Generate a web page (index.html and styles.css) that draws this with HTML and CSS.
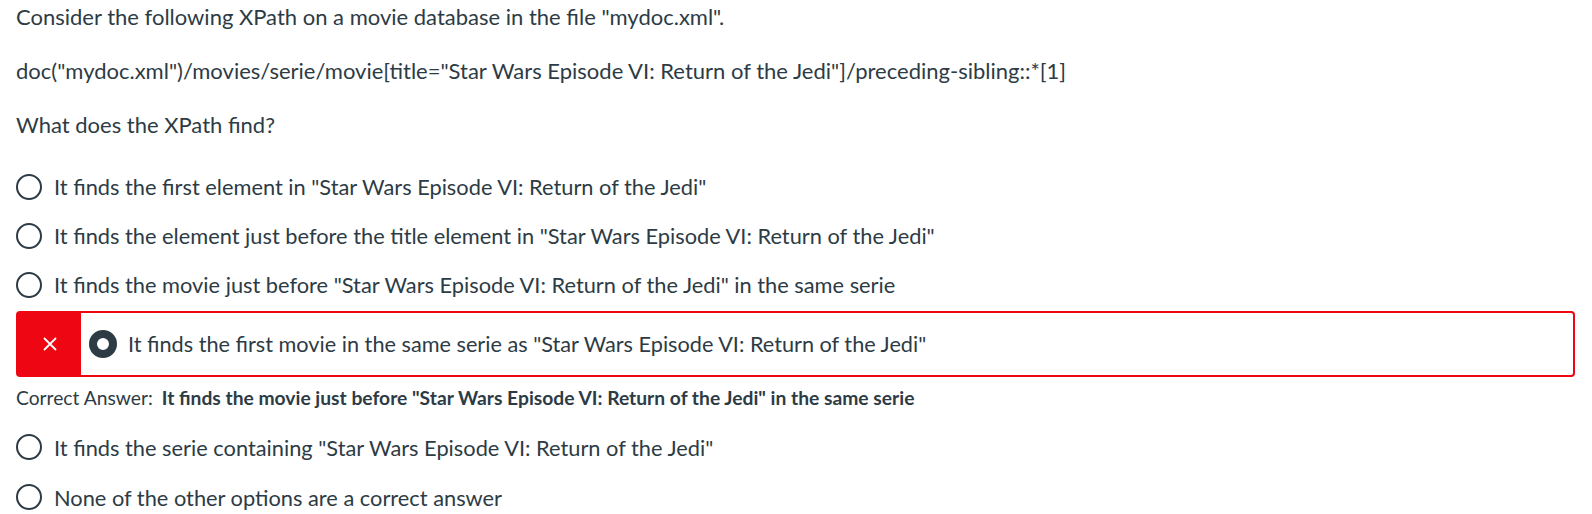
FILE: index.html
```html
<!DOCTYPE html>
<html>
<head>
<meta charset="utf-8">
<link rel="stylesheet" href="styles.css">
</head>
<body>
<div class="question">
  <p class="para">Consider the following XPath on a movie database in the file "mydoc.xml".</p>
  <p class="para">doc("mydoc.xml")/movies/serie/movie[title="Star Wars Episode VI: Return of the Jedi"]/preceding-sibling::*[1]</p>
  <p class="para">What does the XPath find?</p>
  <div class="answers">
    <div class="option"><span class="radio"></span><span class="label">It finds the first element in "Star Wars Episode VI: Return of the Jedi"</span></div>
    <div class="option"><span class="radio"></span><span class="label">It finds the element just before the title element in "Star Wars Episode VI: Return of the Jedi"</span></div>
    <div class="option"><span class="radio"></span><span class="label">It finds the movie just before "Star Wars Episode VI: Return of the Jedi" in the same serie</span></div>
    <div class="option wrong">
      <div class="flag">
        <svg width="14" height="14" viewBox="0 0 14 14"><path d="M1 1 L13 13 M13 1 L1 13" stroke="#fff" stroke-width="1.8" fill="none"/></svg>
      </div>
      <span class="radio checked"></span><span class="label">It finds the first movie in the same serie as "Star Wars Episode VI: Return of the Jedi"</span>
    </div>
    <div class="correct">Correct Answer:&nbsp; <b>It finds the movie just before "Star Wars Episode VI: Return of the Jedi" in the same serie</b></div>
    <div class="option tall"><span class="radio"></span><span class="label">It finds the serie containing "Star Wars Episode VI: Return of the Jedi"</span></div>
    <div class="option tall"><span class="radio"></span><span class="label">None of the other options are a correct answer</span></div>
  </div>
</div>
</body>
</html>
```
FILE: styles.css
```css
html, body {
  margin: 0;
  padding: 0;
  background: #fff;
}
body {
  font-family: Lato, "Noto Sans", sans-serif;
  color: #2d3b45;
  font-size: 22px;
}
.question {
  padding: 0 16px;
}
.para {
  margin: 0 0 21px 0;
  line-height: 33px;
}
.answers {
  display: flex;
  flex-direction: column;
  margin-top: 16px;
  font-size: 21.8px;
}
.option {
  display: flex;
  align-items: center;
  height: 49px;
}
.option.tall {
  height: 50px;
}
.radio {
  box-sizing: border-box;
  width: 26px;
  height: 26px;
  border: 2px solid #2d3b45;
  border-radius: 50%;
  flex: none;
  margin-right: 12px;
}
.radio.checked {
  width: 28px;
  height: 28px;
  border: 8px solid #2d3b45;
  margin-right: 11px;
}
.wrong {
  box-sizing: border-box;
  height: 66px;
  border: 2px solid #ee0612;
  border-radius: 4px;
  margin-top: 2px;
  margin-right: 1px;
}
.flag {
  align-self: stretch;
  width: 63px;
  background: #ee0612;
  display: flex;
  align-items: center;
  justify-content: center;
  margin-right: 8px;
}
.flag + .radio.checked + .label {
  font-size: 21.7px;
}
.correct {
  font-size: 19.25px;
  height: 45px;
  box-sizing: border-box;
  padding-bottom: 5px;
  display: flex;
  align-items: center;
}
.correct b {
  font-weight: 700;
  margin-left: 4px;
}
```
